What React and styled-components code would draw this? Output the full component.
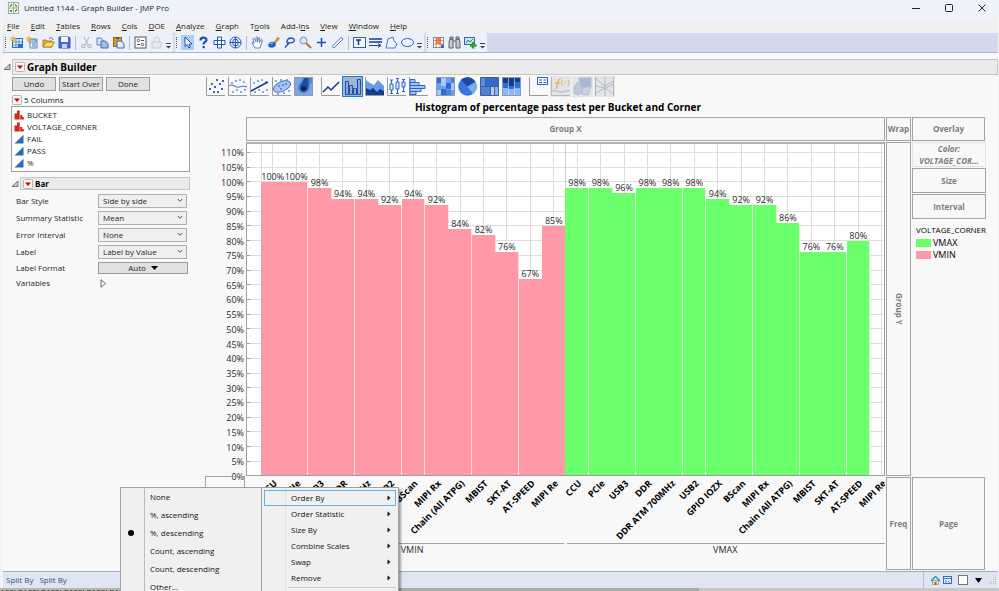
import React, { Fragment } from "react";
import styled, { createGlobalStyle, css } from "styled-components";

const GlobalStyle = createGlobalStyle`
  * {
    box-sizing: border-box;
  }

  body {
    margin: 0;
    background: #f4f4f4;
    font-family: "Open Sans", "Noto Sans", sans-serif;
    font-size: 8px;
    line-height: 12px;
    color: #1e1e1e;
  }

  button, select, input {
    font: inherit;
    color: inherit;
    margin: 0;
  }
`;

// window frame

const Screen = styled.div`
  height: 100vh;
  min-height: 500px;
  overflow: hidden;
  display: flex;
  flex-direction: column;
  position: relative;
`;

const Window = styled.div`
  flex: 1;
  min-height: 0;
  margin: 0 1px 0 3px;
  display: flex;
  flex-direction: column;
  background: #f8f8f8;
`;

const TitleBar = styled.header`
  height: 20px;
  display: flex;
  align-items: center;
  padding: 0 0 4px 5px;
  background: #eef3fb;

  h1 {
    flex: 1;
    margin: 0 0 0 5px;
    font-size: 8px;
    font-weight: 400;
  }
`;

const WindowButton = styled.button`
  width: 33px;
  height: 16px;
  padding: 0;
  border: 0;
  background: none;
  display: flex;
  align-items: center;
  justify-content: center;
`;

const MenuBar = styled.nav`
  height: 13px;
  display: flex;
  align-items: center;
  gap: 11px;
  padding: 0 0 1px 4px;
  background: #f0f0f0;

  button {
    padding: 0;
    border: 0;
    background: none;
  }
`;

const Toolbar = styled.div`
  height: 20px;
  display: flex;
  gap: 2px;
  padding-left: 1px;
  background: #d3d9ee;
  border-bottom: 1px solid #a9b3da;
`;

const Band = styled.div`
  display: flex;
  align-items: center;
  gap: 3px;
  padding: 0 2px 0 1px;
  background: #ebf0fa;
  border-radius: 2px;
`;

const Grip = styled.span`
  width: 2px;
  height: 11px;
  border-left: 1px dotted #555;
`;

const Divider = styled.span`
  width: 1px;
  height: 14px;
  margin: 0 1px;
  background: #b4bccf;
`;

const ToolButton = styled.button`
  width: 13px;
  height: 15px;
  padding: 0;
  border: 0;
  background: ${(props) => (props.$active ? "#a9d1f8" : "none")};
  display: flex;
  align-items: center;
  justify-content: center;
`;

const More = styled.button`
  width: 5px;
  height: 6px;
  padding: 0;
  border: 0;
  background: none;
  display: flex;
  align-self: flex-end;
  margin-bottom: 3px;
`;

// outline header shared by "Graph Builder" and "Bar"

const Outline = styled.div`
  display: flex;
  align-items: center;
  gap: 1px;

  h2 {
    flex: 1;
    height: ${(props) => (props.$small ? 13 : 16)}px;
    margin: 0;
    display: flex;
    align-items: center;
    gap: 2px;
    padding-left: 2px;
    background: #ebebeb;
    border: 1px solid #c6c6c6;
    font-size: ${(props) => (props.$small ? 8 : 10)}px;
    font-weight: 700;
    color: #000;
  }
`;

const IconButton = styled.button`
  padding: 0;
  border: 0;
  background: none;
  display: flex;
`;

const Content = styled.main`
  flex: 1;
  min-height: 0;
  padding-top: 6px;
  display: flex;
  flex-direction: column;
`;

const Body = styled.div`
  flex: 1;
  min-height: 0;
  display: flex;
`;

// left control panel

const Panel = styled.aside`
  width: 202px;
  flex: none;
  padding: 2px 15px 0 8px;
`;

const ButtonRow = styled.div`
  display: flex;
  gap: 3px;
  padding-left: 1px;
`;

const PushButton = styled.button`
  width: 44px;
  height: 14px;
  padding: 0;
  background: #e1e1e1;
  border: 1px solid #9a9a9a;
  line-height: 10px;
  white-space: nowrap;
`;

const ColumnsTitle = styled.div`
  display: flex;
  align-items: center;
  gap: 2px;
  height: 12px;
  margin: 3px 0 0 1px;
`;

const ColumnList = styled.ul`
  height: 66px;
  margin: 0 0 5px;
  padding: 2px;
  list-style: none;
  background: #fff;
  border: 1px solid #a0a0a0;

  li {
    display: flex;
    align-items: center;
    gap: 3px;
    height: 12px;
  }
`;

const Options = styled.div`
  display: grid;
  grid-template-columns: 82px 90px;
  row-gap: 3px;
  align-items: center;
  padding: 4px 0 0 5px;
`;

const SelectBox = styled.div`
  position: relative;
  margin-right: 1px;

  select {
    display: block;
    width: 100%;
    height: 14px;
    padding: 0 12px 0 4px;
    appearance: none;
    background: #efefef;
    border: 1px solid #b0b0b0;
    border-radius: 0;
    line-height: 12px;
  }

  svg {
    position: absolute;
    right: 4px;
    top: 4px;
    pointer-events: none;
  }
`;

const AutoButton = styled(PushButton)`
  width: 90px;
  height: 12px;
  display: flex;
  align-items: center;
  justify-content: center;
  gap: 5px;
`;

// graph area

const Graph = styled.section`
  flex: 1;
  min-width: 0;
  display: flex;
  flex-direction: column;
  padding: 1px 13px 1px 0;

  h3 {
    margin: 3px 0;
    font-size: 10px;
    line-height: 14px;
    font-weight: 700;
    text-align: center;
    color: #000;
    padding-right: 74px;
  }
`;

const TypeBar = styled.div`
  display: flex;
  gap: 6px;
  height: 21px;
`;

const TypeGroup = styled.div`
  display: flex;
  gap: 1px;
`;

const TypeButton = styled.button`
  width: 21px;
  height: 21px;
  padding: 0;
  border: 1px solid transparent;
  background: none;
  display: flex;

  ${(props) =>
    props.$selected &&
    css`
      background: #9fb4d3;
      border-color: #1a7fd4;
    `}

  ${(props) =>
    props.disabled &&
    css`
      background: #e4e4e4;
    `}
`;

const Zones = styled.div`
  flex: 1;
  min-height: 0;
  display: grid;
  grid-template-columns: 40px 1fr 25px 73px;
  grid-template-rows: 24px 1fr 93px;
  gap: 1px;
`;

const Zone = styled.div`
  min-width: 0;
  display: flex;
  align-items: center;
  justify-content: center;
  border: 1px solid #a3a3a3;
  color: #7d7d7d;
  font-weight: 700;
  text-align: center;

  ${(props) =>
    props.$filled &&
    css`
      border-color: #e3e3d6;
      font-style: italic;
    `}

  ${(props) =>
    props.$vertical &&
    css`
      span {
        writing-mode: vertical-rl;
      }
    `}
`;

const Corner = styled.div`
  margin-top: -1px;
  border: 1px solid #a3a3a3;
`;

const SideZones = styled.div`
  display: grid;
  grid-auto-rows: 25px;
  gap: 1px;
`;

const Legend = styled.div`
  grid-row: span 2;
  padding: 3px 0 0 4px;
  color: #000;

  h4 {
    margin: 0;
    font-size: 8px;
    line-height: 14px;
    font-weight: 400;
  }

  ul {
    margin: 0;
    padding: 0;
    list-style: none;
    font-size: 9px;
  }

  li {
    display: flex;
    align-items: center;
    gap: 2px;
    height: 12px;
  }
`;

const Swatch = styled.span`
  width: 15px;
  height: 8px;
  background: ${(props) => props.$color};
`;

const Plot = styled.svg`
  display: block;
  width: 100%;
  height: 100%;
  overflow: ${(props) => (props.$spill ? "visible" : "hidden")};
  font-size: 9px;
  fill: #2b2b2b;
`;

const StatusBar = styled.footer`
  height: 17px;
  display: flex;
  align-items: center;
  gap: 6px;
  padding: 0 1px 0 3px;
  background: #dfe6f1;
  border-top: 1px solid #9fabcf;
  color: #31537f;

  input {
    appearance: none;
    width: 10px;
    height: 10px;
    margin-left: 3px;
    border: 1px solid #777;
    background: #fff;
  }
`;

const StatusTools = styled.div`
  margin-left: auto;
  height: 16px;
  display: flex;
  align-items: center;
  gap: 3px;
  padding-left: 7px;
  border-left: 1px solid #b4bccf;
`;

// sliver of the data table behind the window
const Behind = styled.div`
  height: 3px;
  overflow: hidden;
  white-space: nowrap;
  line-height: 8px;
  color: #222;
  background: linear-gradient(90deg, #b4b8ac 120px, #a9aba9 120px 70%, #c8c8c8 70%);
`;

// context menus

const Menus = styled.div`
  position: absolute;
  left: 120px;
  top: 487px;
  display: flex;
  color: #111;
  box-shadow: 2px 2px 2px rgba(0, 0, 0, 0.35);
`;

const Menu = styled.div`
  width: ${(props) => props.$width}px;
  height: 130px;
  padding: ${(props) => (props.$joined ? "0 2px" : "2px")};
  background: linear-gradient(
    90deg,
    #f0f0f0 23px,
    ${(props) => props.$rule} 23px 24px,
    #f0f0f0 24px
  );
  border: 1px solid #a0a0a0;
  border-right-width: ${(props) => (props.$joined ? 0 : 1)}px;
`;

const MenuItem = styled.button`
  width: 100%;
  height: ${(props) => (props.$tall ? 18 : 16)}px;
  padding: 0 4px 0 0;
  display: grid;
  grid-template-columns: 26px 1fr 4px;
  align-items: center;
  text-align: left;
  background: none;
  border: 1px solid ${(props) => (props.$hot ? "#5bb3e8" : "transparent")};
`;

const Bullet = styled.span`
  width: 6px;
  height: 6px;
  margin-left: 4px;
  border-radius: 50%;
  background: ${(props) => (props.$on ? "#000" : "none")};
`;

const MenuLine = styled.hr`
  margin: 1px 0 0 24px;
  border: 0;
  border-top: 1px solid #cfcfcf;
`;

// data

const menuNames = [
  ["", "F", "ile"],
  ["", "E", "dit"],
  ["", "T", "ables"],
  ["", "R", "ows"],
  ["", "C", "ols"],
  ["", "D", "OE"],
  ["", "A", "nalyze"],
  ["", "G", "raph"],
  ["T", "o", "ols"],
  ["Add-I", "n", "s"],
  ["", "V", "iew"],
  ["", "W", "indow"],
  ["", "H", "elp"],
];

const columns = [
  ["BUCKET", true],
  ["VOLTAGE_CORNER", true],
  ["FAIL", false],
  ["PASS", false],
  ["%", false],
];

const options = [
  ["Bar Style", "Side by side"],
  ["Summary Statistic", "Mean"],
  ["Error Interval", "None"],
  ["Label", "Label by Value"],
];

const orderings = [
  "None",
  "%, ascending",
  "%, descending",
  "Count, ascending",
  "Count, descending",
  "Other...",
];

const actions = ["Order By", "Order Statistic", "Size By", "Combine Scales", "Swap", "Remove"];

const PINK = "#ff99a8";
const GREEN = "#6bff6b";

const bars = [
  ["CCU", 100],
  ["PCIe", 100],
  ["USB3", 98],
  ["DDR", 94],
  ["DDR ATM 700MHz", 94],
  ["USB2", 92],
  ["BScan", 94],
  ["MIPI Rx", 92],
  ["Chain (All ATPG)", 84],
  ["MBIST", 82],
  ["SKT-AT", 76],
  ["AT-SPEED", 67],
  ["MIPI Re", 85],
  ["CCU", 98],
  ["PCIe", 98],
  ["USB3", 96],
  ["DDR", 98],
  ["DDR ATM 700MHz", 98],
  ["USB2", 98],
  ["GPIO IOZX", 94],
  ["BScan", 92],
  ["MIPI Rx", 92],
  ["Chain (All ATPG)", 86],
  ["MBIST", 76],
  ["SKT-AT", 76],
  ["AT-SPEED", 80],
  ["MIPI Re", null],
];

const VMIN_COUNT = 13;
const START = 2.35;
const STEP = 3.665;
const AXIS_MAX = 113.5;

const ticks = Array.from({ length: 23 }, (_, i) => i * 5);
const barX = (i) => START + i * STEP;
const x = (i) => `${barX(i)}%`;
const mid = (i) => `${barX(i) + STEP / 2}%`;
const y = (value) => `${100 - (value / AXIS_MAX) * 100}%`;

// small icons

const RedTriangle = () => (
  <svg width="10" height="10" viewBox="0 0 10 10">
    <rect x="0.5" y="0.5" width="9" height="9" rx="1" fill="#f6f6f6" stroke="#b5b5b5" />
    <path d="M2 3.5h6L5 7z" fill="#d40000" />
  </svg>
);

const Disclosure = () => (
  <svg width="8" height="8" viewBox="0 0 8 8">
    <path d="M1 6.5h6V1z" fill="#ccc" stroke="#555" strokeWidth="0.8" />
  </svg>
);

const Chevron = () => (
  <svg width="6" height="5" viewBox="0 0 6 5" fill="none" stroke="#555">
    <path d="M0.8 1L3 3.3 5.2 1" />
  </svg>
);

const NominalIcon = () => (
  <svg width="10" height="10" viewBox="0 0 10 10" fill="#d0281b">
    <path d="M0.5 3.5h2.5v6H0.5zM3 0.5h2.700v9H3zM6.200 5h2v4.500h-2zM8 7h1.800v2.500H8z" />
  </svg>
);

const ContinuousIcon = () => (
  <svg width="10" height="10" viewBox="0 0 10 10">
    <path d="M0.5 9.5h9V0.8z" fill="#2c68bb" />
  </svg>
);

const Arrow = () => (
  <svg width="4" height="6" viewBox="0 0 4 6">
    <path d="M0.5 0.5v5L3.5 3z" fill="#111" />
  </svg>
);

const AppIcon = () => (
  <svg width="11" height="12" viewBox="0 0 11 12" fill="none">
    <rect x="0.5" y="0.5" width="10" height="11" fill="#f4f8ee" stroke="#a3a89a" />
    <path d="M5.5 1v10M1 6h9" stroke="#a3a89a" />
    <path d="M2 5l2-3M2 3.5h2M7 2l2 3M7 4h2M2 8l2 2M2 10l2-2M7 10l2-3M7 8.5h2" stroke="#3a9a35" />
  </svg>
);

const toolIcons = {
  "New data table": (
    <Fragment>
      <rect x="2.5" y="2.5" width="10" height="9" fill="#e4effb" stroke="#2e6fb7" />
      <path d="M3 6h9M3 9h9M6 3v8M9 3v8" stroke="#5b93d0" />
      <path d="M3 0v6M0 3h6M1 1l4 4M5 1L1 5" stroke="#f0b429" />
      <path d="M8 8h4v3H8z" fill="#2e6fb7" />
    </Fragment>
  ),
  "New script": (
    <Fragment>
      <path d="M4 3h7v9H4z" fill="#edf4fd" stroke="#5e86b8" />
      <path d="M3 4h7v2H3zM6 8h4M6 10h4" fill="#fff" stroke="#4a7cba" />
      <path d="M3 0v6M0 3h6M1 1l4 4M5 1L1 5" stroke="#f0b429" />
    </Fragment>
  ),
  Open: (
    <Fragment>
      <path d="M1 11V4h3l1 1h5v6z" fill="#e6a93a" stroke="#b98128" />
      <path d="M1 11l3-5h8.500l-3 5z" fill="#ffd978" stroke="#b98128" />
      <path d="M7 2.500c2-1.500 4-.5 4 1.500" stroke="#2e6fb7" />
    </Fragment>
  ),
  Save: (
    <Fragment>
      <path d="M1 1h10l1 1v10H1z" fill="#4a6ad0" stroke="#3c50b0" />
      <path d="M3 1h7v5H3z" fill="#f4f6fc" />
      <path d="M4 8h5v4H4z" fill="#c8d0e6" />
    </Fragment>
  ),
  Cut: (
    <g stroke="#b4bccb" strokeWidth="1.200">
      <path d="M4 1l4 8M9 1L5 9" />
      <circle cx="3.500" cy="10" r="1.700" />
      <circle cx="9.500" cy="10" r="1.700" />
    </g>
  ),
  Copy: (
    <Fragment>
      <path d="M1 2h4l2 2v5H1z" fill="#d7e5f8" stroke="#5a83b9" />
      <path d="M5 5h4l3 2.500V12H5z" fill="#9fc0ee" stroke="#3f6dab" />
    </Fragment>
  ),
  Paste: (
    <Fragment>
      <rect x="1.500" y="1.500" width="8" height="9" fill="#d99a2c" stroke="#9a661a" />
      <path d="M4 1h3v2H4z" fill="#555" />
      <path d="M5 5h4l3 2.500V12H5z" fill="#e2ecfa" stroke="#3f6dab" />
    </Fragment>
  ),
  Recode: (
    <g stroke="#555">
      <rect x="1" y="1" width="11" height="11" fill="#fff" />
      <circle cx="4.500" cy="4.500" r="1.200" />
      <circle cx="8.500" cy="8.500" r="1.200" />
      <path d="M7 4.500h3M3 8.500h3" />
    </g>
  ),
  Lock: (
    <g stroke="#c6cbd6">
      <rect x="2" y="6" width="9" height="6" fill="#e6eaf2" />
      <path d="M4 6V3.500c0-3 5-3 5 0V6" />
    </g>
  ),
  Arrow: <path d="M4 1v9.500l2.300-2 1.500 3.500 1.500-.8L8 8h3z" fill="#fff" stroke="#1d4fa8" />,
  Help: (
    <Fragment>
      <path d="M3.500 4.500C3.500.5 9.500.8 9.500 4c0 2-3 2-3 4.500" stroke="#1d4fa8" strokeWidth="2.200" />
      <rect x="5.500" y="10" width="2.200" height="2.200" fill="#1d4fa8" />
    </Fragment>
  ),
  Move: (
    <path
      d="M4.500 1h4v3.500H12v4H8.500V12h-4V8.500H1v-4h3.500zM4.500 4.500h4v4h-4z"
      stroke="#2256b5"
      fill="#f3f7ff"
    />
  ),
  Globe: (
    <g stroke="#2256b5">
      <circle cx="6.500" cy="6.500" r="5.500" />
      <path d="M6.500 1v11M1 6.500h11" />
      <ellipse cx="6.500" cy="6.500" rx="2.800" ry="3.500" />
    </g>
  ),
  Grabber: (
    <path
      d="M4 12L1 7c0-1 1-1 2 .5L2 3c0-1 1-1 1.500 0L5 6V1.500c0-1 1.500-1 1.500 0V6l1-4c.3-1 1.500-.8 1.300.2L8.500 6.500l1.700-2.500c.6-.8 1.500-.3 1.200.6L9 12z"
      fill="#fff"
      stroke="#5f82c0"
    />
  ),
  Brush: (
    <Fragment>
      <path d="M7 6l4-5 1.500 1.500-4 5z" fill="#e8912a" stroke="#b86a14" strokeWidth="0.500" />
      <path d="M1 9c1-3 4-4 6-3l2 2c0 3-4 5-7 3z" fill="#1f66c4" />
      <path d="M3 8l3-1" stroke="#9cc7f5" />
    </Fragment>
  ),
  Lasso: (
    <g stroke="#1d4fa8" strokeWidth="1.300">
      <path d="M2 11.500L6 7M5 7.500C2.500 5 5 2 8 2s4.500 2.500 2.500 4-5 1-4.500 0" />
    </g>
  ),
  Magnifier: (
    <Fragment>
      <circle cx="4.500" cy="4.500" r="3.500" fill="#d5e6fa" stroke="#7b8fae" />
      <path d="M7 7l5 5" stroke="#a8742a" strokeWidth="1.800" />
    </Fragment>
  ),
  Crosshairs: <path d="M6.500 2v9M2 6.500h9" stroke="#1d4fa8" strokeWidth="1.500" />,
  Eraser: <path d="M1 10.500L10 1.500l2 1.500-9 9z" fill="#f5f8ff" stroke="#5876b5" />,
  Annotate: (
    <Fragment>
      <rect x="0.500" y="1.500" width="12" height="10" fill="#f2f6fd" stroke="#3a5fa8" />
      <path d="M3 4h5M5.500 4v5" stroke="#14398c" strokeWidth="1.500" />
    </Fragment>
  ),
  Line: (
    <Fragment>
      <path d="M0 3h13M0 6h13" stroke="#1b3d9b" strokeWidth="1.500" />
      <path d="M0 9.500h11M9 7.500l3 2-3 2" stroke="#1b3d9b" />
    </Fragment>
  ),
  Polygon: <path d="M3 3l5-2 1 4 3 3-2 4H1z" fill="#f0f5ff" stroke="#4d74c0" />,
  Oval: <ellipse cx="6.500" cy="6.500" rx="6" ry="4" fill="#f5f9ff" stroke="#2256b5" />,
  "Data view": (
    <Fragment>
      <rect x="1.500" y="1.500" width="10" height="10" fill="#fff" stroke="#6f8ac4" />
      <path d="M4 2h5v6H4z" fill="#f08a24" />
      <path d="M2 4.500h9M2 8h9M4 2v9M8 2v9" stroke="#dc6a45" strokeWidth="0.800" />
      <path d="M9 8.500h3V12H9z" fill="#4668b0" />
    </Fragment>
  ),
  Find: (
    <g fill="#c5ccd6" stroke="#566172">
      <path d="M2 3h3v9H1V6zM8 3h3l1 3v6H8z" />
      <path d="M2 1h3v2H2zM8 1h3v2H8zM5 5h3" />
    </g>
  ),
  "Add graph": (
    <Fragment>
      <rect x="0.500" y="1.500" width="10" height="7" fill="#cfe2f8" stroke="#3766a8" />
      <path d="M2 7l2-3 2 2 3-3" stroke="#2c8a2c" />
      <path d="M9 6v6.500M6 9.500h6.500" stroke="#2ba02b" strokeWidth="2.400" />
    </Fragment>
  ),
};

const toolBands = [
  ["New data table", "New script", "Open", "Save", "|", "Cut", "Copy", "Paste", "|", "Recode", "Lock"],
  [
    "Arrow", "Help", "Move", "Globe", "|",
    "Grabber", "Brush", "Lasso", "Magnifier", "Crosshairs", "Eraser", "|",
    "Annotate", "Line", "Polygon", "Oval",
  ],
  ["Data view", "Find", "Add graph"],
];

// graph type icons, drawn in a 19 x 19 box

const Frame = ({ color = "#9b9b9b" }) => <path d="M0.5 0v18.500H19" stroke={color} />;

const Dots = ({ points, color = "#2f62c4" }) =>
  points.map(([cx, cy]) => (
    <rect key={`${cx}-${cy}`} x={cx - 1} y={cy - 1} width="2" height="2" fill={color} />
  ));

const scatter = [[4, 12], [6, 7], [9, 10], [11, 3], [12, 15], [14, 7], [16, 12], [8, 15], [17, 4]];
const scatterLight = [[4, 6], [8, 4], [12, 3], [16, 5], [5, 15], [9, 13], [13, 15], [17, 13]];

const typeGroups = [
  {
    Points: (
      <Fragment>
        <Frame />
        <Dots points={scatter} />
      </Fragment>
    ),
    Smoother: (
      <Fragment>
        <Frame />
        <Dots points={scatterLight} color="#86a9df" />
        <path d="M1 9c4-3 6 2 10 1s5-1 8 0" stroke="#3f62ad" />
      </Fragment>
    ),
    "Line of fit": (
      <Fragment>
        <Frame />
        <Dots points={scatterLight} color="#86a9df" />
        <path d="M1 14L18 5" stroke="#14398c" strokeWidth="1.500" />
      </Fragment>
    ),
    Ellipse: (
      <Fragment>
        <Frame />
        <Dots points={[[4, 4], [9, 3], [15, 3], [6, 17], [12, 16], [17, 14]]} color="#86a9df" />
        <ellipse cx="10" cy="9.500" rx="9" ry="4.800" transform="rotate(-24 10 9.500)" fill="#a9c6f1" stroke="#3f6fc4" />
        <Dots points={[[7, 9], [11, 8], [9, 12], [14, 7]]} color="#5f8cd8" />
      </Fragment>
    ),
    Contour: (
      <Fragment>
        <rect width="19" height="19" fill="#7ba5e6" />
        <path d="M9 0c0 4-5 6-5 11s7 7 10 3 0-7 5-9V0z" fill="#5585d6" />
        <path d="M10 0c0 6-4 6-4 11s7 5 8 0 0-7 1-11z" fill="#1f4a9f" />
        <circle cx="9.500" cy="11.500" r="2.500" fill="#0b2765" />
        <path d="M0.500 0v18.500H18.500V0.500H0" stroke="#9b9b9b" />
      </Fragment>
    ),
  },
  {
    Line: (
      <Fragment>
        <Frame />
        <path d="M2 15l5-5 3 3 8-8" stroke="#14398c" strokeWidth="1.500" />
      </Fragment>
    ),
    Bar: (
      <g fill="#87a9e0" stroke="#23509f">
        <path d="M2.500 4.500h3v13h-3zM6.500 8.500h3v9h-3zM10.500 11.500h3v6h-3zM14.500 2.500h3v15h-3z" />
      </g>
    ),
    Area: (
      <Fragment>
        <Frame />
        <path d="M1 18V3l4 3 4 2 4-5 6 6v9z" fill="#6a9be0" />
        <path d="M1 18v-7l4 2 3-2 4 4 3-3 4 2v4z" fill="#133d8f" />
      </Fragment>
    ),
    "Box plot": (
      <Fragment>
        <Frame />
        <g stroke="#2f62c4" fill="#dbe8fb">
          <path d="M4.500 3v14M10.500 1v16M16.500 2v13M3 3h3M9 1.500h3M15 2.500h3M3 16.500h3M9 16.500h3M15 14.500h3" />
          <path d="M3 7h3v6H3zM9 5h3v7H9zM15 5h3v5h-3z" />
        </g>
      </Fragment>
    ),
    Histogram: (
      <Fragment>
        <Frame />
        <path d="M1 2.500h5v3H1zM1 5.500h9v3H1zM1 8.500h15v3H1zM1 11.500h11v3H1zM1 14.500h6v3H1z" fill="#a9c6f1" stroke="#2f62c4" />
      </Fragment>
    ),
  },
  {
    Heatmap: (
      <Fragment>
        <rect width="19" height="19" fill="#6f9fe8" />
        <path d="M0 0h5v6H0zM10 6h5v6h-5zM5 12h5v7H5z" fill="#2f6bd0" />
        <path d="M5 0h5v9H5zM15 6h4v7h-4zM0 13h5v6H0z" fill="#a9c8f5" />
        <path d="M15 0h4v6h-4zM10 13h5v6h-5z" fill="#4a83dd" />
        <rect x="0.500" y="0.500" width="18" height="18" stroke="#8c9bb5" />
      </Fragment>
    ),
    Pie: (
      <Fragment>
        <circle cx="9.500" cy="9.500" r="9.300" fill="#3877db" />
        <path d="M9.500 9.500L3 2.800A9.300 9.300 0 0 1 17.500 5z" fill="#1d4aa5" />
        <path d="M9.500 9.500L17.500 5A9.300 9.300 0 0 1 15 17z" fill="#79adf2" />
      </Fragment>
    ),
    Treemap: (
      <g stroke="#455d87">
        <path d="M0.500 0.500h5v9h-5z" fill="#5b91e4" />
        <path d="M5.500 0.500h13v9h-13z" fill="#2f6bd0" />
        <path d="M0.500 9.500h10v9h-10z" fill="#4a83dd" />
        <path d="M10.500 9.500h4v9h-4z" fill="#b4d0f7" />
        <path d="M14.500 9.500h4v9h-4z" fill="#8cb6f2" />
      </g>
    ),
    Mosaic: (
      <Fragment>
        <rect width="19" height="19" fill="#8db7f3" />
        <path d="M0 0h6v6H0zM6 0h6v9H6zM12 0h7v5h-7z" fill="#143c8f" />
        <path d="M0 6h6v5H0zM6 9h6v3H6zM12 5h7v6h-7z" fill="#2f6bd0" />
        <path d="M6.500 0v19M12.500 0v19" stroke="#dbe8fb" strokeWidth="0.600" />
        <rect x="0.500" y="0.500" width="18" height="18" stroke="#8c9bb5" />
      </Fragment>
    ),
  },
  {
    "Caption box": (
      <Fragment>
        <Frame />
        <rect x="8.500" y="0.500" width="10" height="7" fill="#fff" stroke="#2f62c4" />
        <path d="M10 3h3M14.500 3h3M10 5.500h3M14.500 5.500h3" stroke="#2f62c4" />
      </Fragment>
    ),
    Formula: (
      <Fragment>
        <Frame color="#b9b9b9" />
        <path d="M4 11c2 1 2-2 2.500-4S8 1 10 2M4 6h5" stroke="#dcb75c" strokeWidth="1.300" />
        <path d="M11.500 3c-1.500 2-1.500 4 0 6M17 3c1.500 2 1.500 4 0 6M13.500 6h1.500" stroke="#dcb75c" />
        <path d="M1 14c4-2 6 2 10 1s5-2 8-1" stroke="#9fb3d4" />
      </Fragment>
    ),
    "Map shapes": (
      <g stroke="#b3bccb">
        <path d="M1 10l4-5 5 2v8l-5 3-4-2z" fill="#bcc8dc" />
        <path d="M6 1h12v9l-5 4-5-4z" fill="#a9b8d2" />
        <path d="M9 11l9-2-3 9-6-1z" fill="#c9d2e2" />
      </g>
    ),
    Parallel: (
      <Fragment>
        <path d="M1 2l9 7 9-5M1 16l9-5 9 6M1 9l9 2 9-4" stroke="#a9b8d2" />
        <path d="M0.500 0v19M10 0v19M18.500 0v19" stroke="#b5b5b5" />
      </Fragment>
    ),
  },
];

const PlotArea = () => (
  <Plot role="img" aria-label="Bar chart" shapeRendering="crispEdges">
    <rect width="100%" height="100%" fill="#fff" />
    {ticks.map((t) => (
      <line key={t} x1="0" x2="100%" y1={y(t)} y2={y(t)} stroke="#dedede" />
    ))}
    {bars.map((bar, i) => (
      <line key={i} x1={mid(i)} x2={mid(i)} y1="0" y2="100%" stroke="#dedede" />
    ))}
    <line x1={x(0)} x2={x(0)} y1="0" y2="100%" stroke="#dedede" />
    <line x1={x(VMIN_COUNT)} x2={x(VMIN_COUNT)} y1="0" y2="100%" stroke="#d0d0d0" />
    {bars.map(
      ([, value], i) =>
        value !== null && (
          <Fragment key={i}>
            <rect
              x={x(i)}
              y={y(value)}
              width={`${STEP}%`}
              height={`${(value / AXIS_MAX) * 100}%`}
              fill={i < VMIN_COUNT ? PINK : GREEN}
            />
            <line
              x1={x(i + 1)}
              x2={x(i + 1)}
              y1={y(value)}
              y2="100%"
              stroke={i < VMIN_COUNT ? "#ffdde1" : "#d4f9d4"}
            />
            <text x={mid(i)} y={y(value)} dy="-2" textAnchor="middle">
              {value}%
            </text>
          </Fragment>
        )
    )}
    {ticks.map((t) => (
      <line key={t} x1="0" x2="4" y1={y(t)} y2={y(t)} stroke="#a0a0a0" />
    ))}
    <line x1="0" x2="0" y1="0" y2="100%" stroke="#a0a0a0" strokeWidth="2" />
    <line x1="0" x2="100%" y1="0" y2="0" stroke="#b0b0b0" strokeWidth="3" />
    <line x1="0" x2="100%" y1="100%" y2="100%" stroke="#a0a0a0" strokeWidth="2" />
    <line x1="100%" x2="100%" y1="0" y2="100%" stroke="#a0a0a0" strokeWidth="2" />
  </Plot>
);

const YAxis = () => (
  <Plot $spill>
    {ticks.map((t) => (
      <text key={t} x="100%" y={y(t)} dx="-1" dy="4" textAnchor="end">
        {t}%
      </text>
    ))}
  </Plot>
);

const XAxis = () => (
  <Plot>
    {bars.map(([name], i) => (
      <svg key={i} x={mid(i)} y="0" overflow="visible">
        <text
          transform="translate(5 7) rotate(-45)"
          textAnchor="end"
          fontWeight="700"
          fill="#000"
        >
          {name}
        </text>
      </svg>
    ))}
    <g shapeRendering="crispEdges" stroke="#a0a0a0">
      <line x1="0" x2="49.700%" y1="66" y2="66" />
      <line x1="50.300%" x2="100%" y1="66" y2="66" />
    </g>
    <text x="26%" y="76" textAnchor="middle">
      VMIN
    </text>
    <text x="75%" y="76" textAnchor="middle">
      VMAX
    </text>
  </Plot>
);

const App = () => {
  return (
    <Fragment>
      <GlobalStyle />
      <Screen>
        <Window>
          <TitleBar>
            <AppIcon />
            <h1>Untitled 1144 - Graph Builder - JMP Pro</h1>
            <WindowButton aria-label="Minimize">
              <svg width="8" height="8" stroke="#222">
                <path d="M0 4.500h8" />
              </svg>
            </WindowButton>
            <WindowButton aria-label="Maximize">
              <svg width="8" height="8" stroke="#222" fill="none">
                <rect x="0.500" y="0.500" width="7" height="7" rx="1" />
              </svg>
            </WindowButton>
            <WindowButton aria-label="Close">
              <svg width="8" height="8" stroke="#222">
                <path d="M0.500 0.500l7 7M7.500 0.500l-7 7" />
              </svg>
            </WindowButton>
          </TitleBar>

          <MenuBar>
            {menuNames.map(([before, key, after]) => (
              <button key={before + key + after}>
                {before}
                <u>{key}</u>
                {after}
              </button>
            ))}
          </MenuBar>

          <Toolbar>
            {toolBands.map((band, b) => (
              <Band key={b}>
                <Grip />
                {band.map((name, i) =>
                  name === "|" ? (
                    <Divider key={i} />
                  ) : (
                    <ToolButton key={name} aria-label={name} $active={name === "Arrow"}>
                      <svg width="13" height="13" viewBox="0 0 13 13" fill="none">
                        {toolIcons[name]}
                      </svg>
                    </ToolButton>
                  )
                )}
                <More aria-label="Toolbar options">
                  <svg width="5" height="6" fill="#444">
                    <path d="M0 0h5v1H0zM0 3h5L2.500 5.500z" />
                  </svg>
                </More>
              </Band>
            ))}
          </Toolbar>

          <Content>
            <Outline>
              <IconButton aria-label="Collapse Graph Builder">
                <Disclosure />
              </IconButton>
              <h2>
                <RedTriangle />
                Graph Builder
              </h2>
            </Outline>

            <Body>
              <Panel>
                <ButtonRow>
                  <PushButton>Undo</PushButton>
                  <PushButton>Start Over</PushButton>
                  <PushButton>Done</PushButton>
                </ButtonRow>
                <ColumnsTitle>
                  <RedTriangle />5 Columns
                </ColumnsTitle>
                <ColumnList>
                  {columns.map(([name, nominal]) => (
                    <li key={name}>
                      {nominal ? <NominalIcon /> : <ContinuousIcon />}
                      {name}
                    </li>
                  ))}
                </ColumnList>
                <Outline $small>
                  <IconButton aria-label="Collapse Bar">
                    <Disclosure />
                  </IconButton>
                  <h2>
                    <RedTriangle />
                    Bar
                  </h2>
                </Outline>
                <Options>
                  {options.map(([label, value]) => (
                    <Fragment key={label}>
                      <label htmlFor={label}>{label}</label>
                      <SelectBox>
                        <select id={label} defaultValue={value}>
                          <option>{value}</option>
                        </select>
                        <Chevron />
                      </SelectBox>
                    </Fragment>
                  ))}
                  <label htmlFor="format">Label Format</label>
                  <AutoButton id="format">
                    Auto
                    <svg width="7" height="4">
                      <path d="M0 0h7L3.500 4z" />
                    </svg>
                  </AutoButton>
                  <label htmlFor="variables">Variables</label>
                  <IconButton id="variables" aria-label="Expand Variables">
                    <svg width="10" height="9" fill="#fff" stroke="#666">
                      <path d="M3 0.800v7.400L7.500 4.500z" />
                    </svg>
                  </IconButton>
                </Options>
              </Panel>

              <Graph>
                <TypeBar>
                  {typeGroups.map((group, g) => (
                    <TypeGroup key={g}>
                      {Object.keys(group).map((name, i) => (
                        <TypeButton
                          key={name}
                          aria-label={name}
                          $selected={name === "Bar"}
                          disabled={g === 3 && i > 0}
                        >
                          <svg width="19" height="19" viewBox="0 0 19 19" fill="none">
                            {group[name]}
                          </svg>
                        </TypeButton>
                      ))}
                    </TypeGroup>
                  ))}
                </TypeBar>
                <h3>Histogram of percentage pass test per Bucket and Corner</h3>
                <Zones>
                  <span />
                  <Zone>Group X</Zone>
                  <Zone>Wrap</Zone>
                  <Zone>Overlay</Zone>

                  <YAxis />
                  <PlotArea />
                  <Zone $vertical>
                    <span>Group Y</span>
                  </Zone>
                  <SideZones>
                    <Zone $filled>
                      Color:
                      <br />
                      VOLTAGE_COR...
                    </Zone>
                    <Zone>Size</Zone>
                    <Zone>Interval</Zone>
                    <Legend>
                      <h4>VOLTAGE_CORNER</h4>
                      <ul>
                        <li>
                          <Swatch $color={GREEN} />
                          VMAX
                        </li>
                        <li>
                          <Swatch $color={PINK} />
                          VMIN
                        </li>
                      </ul>
                    </Legend>
                  </SideZones>

                  <Corner />
                  <XAxis />
                  <Zone>Freq</Zone>
                  <Zone>Page</Zone>
                </Zones>
              </Graph>
            </Body>
          </Content>

          <StatusBar>
            <span>Split By</span>
            <span>Split By</span>
            <StatusTools>
              <svg width="9" height="9" viewBox="0 0 9 9">
                <path d="M1.500 4.500h6V9h-6z" fill="#f4e3b0" stroke="#4a7cba" strokeWidth="0.600" />
                <path d="M0 5l4.500-4.500L9 5" fill="none" stroke="#2a8fc0" strokeWidth="1.400" />
                <path d="M3.500 6h2v3h-2z" fill="#a5651c" />
              </svg>
              <svg width="9" height="9" viewBox="0 0 9 9" fill="none">
                <rect x="0.500" y="0.500" width="8" height="7" fill="#e2ecfa" stroke="#3f6dab" />
                <path d="M1 2.500h7M3 4v3M5 5l3 3" stroke="#2e8bd0" />
              </svg>
              <input type="checkbox" aria-label="Select window" />
              <svg width="14" height="5">
                <path d="M4 0h7L7.500 5z" />
              </svg>
              <svg width="9" height="9" fill="#a9b3c6">
                <path d="M7 1h1v1H7zM5 3h1v1H5zM7 3h1v1H7zM3 5h1v1H3zM5 5h1v1H5zM7 5h1v1H7zM1 7h1v1H1zM3 7h1v1H3zM5 7h1v1H5zM7 7h1v1H7z" />
              </svg>
            </StatusTools>
          </StatusBar>
        </Window>
        <Behind>ASS! PASS! PASS! PASS! PASS! PASS!</Behind>

        <Menus>
          <Menu role="menu" $width={141} $rule="#bdbdbd" $joined>
            {orderings.map((name) => (
              <MenuItem key={name} role="menuitem" $tall>
                <Bullet $on={name === "%, descending"} />
                {name}
              </MenuItem>
            ))}
          </Menu>
          <Menu role="menu" $width={138} $rule="#e0e0e0">
            {actions.map((name) => (
              <MenuItem key={name} role="menuitem" $hot={name === "Order By"}>
                <span />
                {name}
                <Arrow />
              </MenuItem>
            ))}
            <MenuLine />
          </Menu>
        </Menus>
      </Screen>
    </Fragment>
  );
};

export default App;
